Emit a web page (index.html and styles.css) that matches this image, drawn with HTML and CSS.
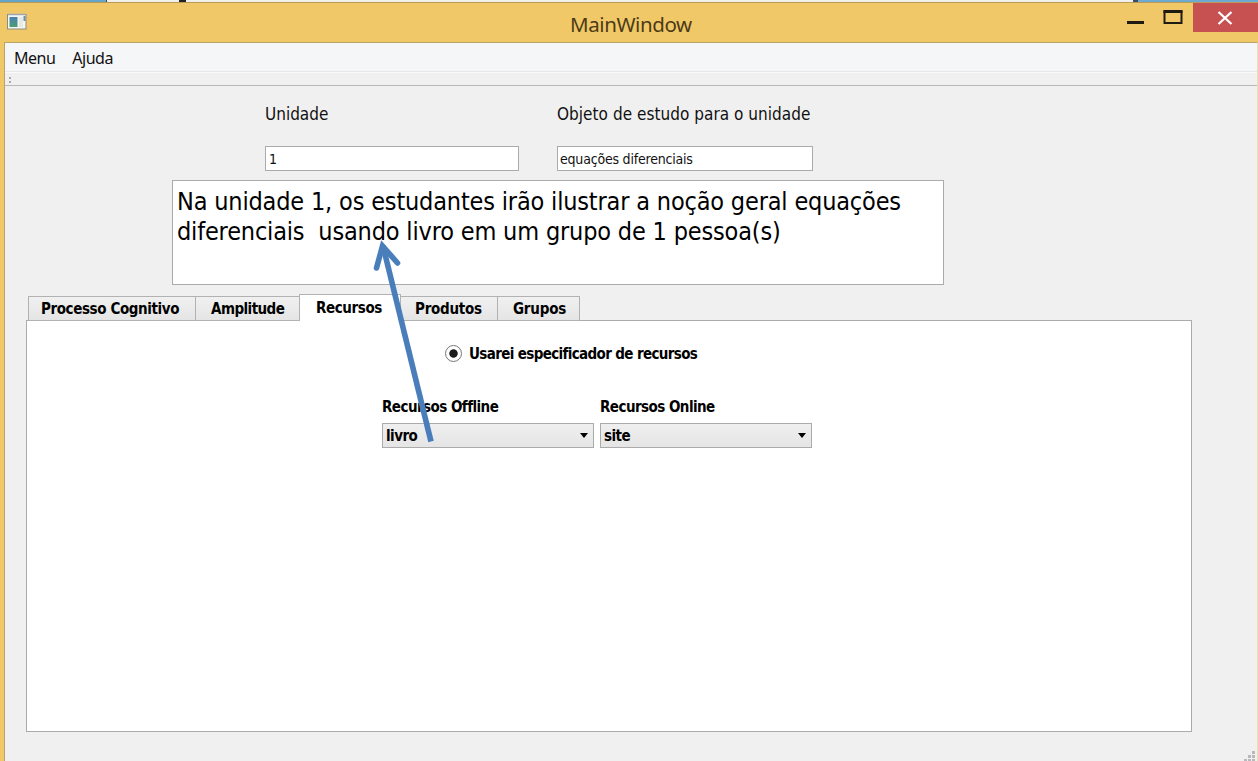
FILE: index.html
```html
<!DOCTYPE html>
<html lang="pt">
<head>
<meta charset="utf-8">
<title>MainWindow</title>
<link rel="stylesheet" href="styles.css">
</head>
<body>
<div class="desktop-strip"><span class="strip-blue"></span><span class="strip-white"></span><span class="strip-mark"></span><span class="strip-rest"></span><span class="strip-dark"></span><span class="strip-end"></span></div>
<div class="window">
  <header class="titlebar">
    <svg class="app-icon" width="20" height="17" viewBox="0 0 20 17">
      <defs><linearGradient id="g" x1="0" y1="0" x2="0" y2="1"><stop offset="0" stop-color="#4a7fb0"/><stop offset="1" stop-color="#4aa070"/></linearGradient></defs>
      <rect x=".5" y="1.500" width="18.500" height="14.500" fill="#f7f7f2" stroke="#8d8b80"/>
      <path d="M1 1.500h18" stroke="#9aa7b0" stroke-width="1.500"/>
      <rect x="2.500" y="4" width="8" height="10" fill="url(#g)"/>
      <rect x="12" y="4" width="4" height="10" fill="#e4e9e6"/>
      <path d="M17.500 3v5" stroke="#6d8fa5" stroke-width="2"/>
    </svg>
    <h1 class="title">MainWindow</h1>
    <div class="controls">
      <svg class="min-max" width="67" height="30" viewBox="0 0 67 30">
        <rect x="1" y="18" width="17" height="3" fill="#1e1b12"/>
        <path d="M38.500 8.500h17v11.500h-17z" fill="none" stroke="#1e1b12" stroke-width="2"/>
        <path d="M37.500 8.500h19" stroke="#1e1b12" stroke-width="3"/>
      </svg>
      <span class="close"><svg width="16" height="14" viewBox="0 0 16 14"><path d="M1.500 1l13 12M14.500 1l-13 12" stroke="#fff" stroke-width="2.300"/></svg></span>
    </div>
  </header>
  <div class="client">
    <nav class="menubar"><span class="menu-item">Menu</span><span class="menu-item">Ajuda</span></nav>
    <div class="toolbar"><span class="grip"></span></div>
    <main class="content">
      <div class="fields">
        <div class="field unit"><label class="label">Unidade</label><div class="input">1</div></div>
        <div class="field object"><label class="label lab-object">Objeto de estudo para o unidade</label><div class="input inp-object">equações diferenciais</div></div>
      </div>
      <div class="summary"><div>Na unidade 1, os estudantes irão ilustrar a noção geral equações</div><div>diferenciais&nbsp; usando livro em um grupo de 1 pessoa(s)</div></div>
      <div class="tabs">
        <div class="tab t1">Processo Cognitivo</div><div class="tab t2">Amplitude</div><div class="tab t3 active">Recursos</div><div class="tab t4">Produtos</div><div class="tab t5">Grupos</div>
      </div>
      <section class="pane">
        <div class="radio-row"><span class="radio"></span><span class="radio-text">Usarei especificador de recursos</span></div>
        <div class="combos">
          <div class="combo-col"><span class="combo-label">Recursos Offline</span><div class="combo"><span>livro</span><span class="caret"></span></div></div>
          <div class="combo-col"><span class="combo-label">Recursos Online</span><div class="combo"><span>site</span><span class="caret"></span></div></div>
        </div>
      </section>
    </main>
  </div>
</div>
<svg class="arrow" width="70" height="210" viewBox="365 238 70 210">
  <path d="M431 441.500L383 246" fill="none" stroke="#4a7ebb" stroke-width="5.600"/>
  <path d="M376.500 268L382.500 246L397.500 263" fill="none" stroke="#4a7ebb" stroke-width="5.600" stroke-linecap="round" stroke-linejoin="miter"/>
</svg>
<svg class="size-grip" width="12" height="12" viewBox="0 0 12 12" fill="#b9b9bd"><path d="M8 0h3v3h-3zM4 4h3v3h-3zM8 4h3v3h-3zM0 8h3v3h-3zM4 8h3v3h-3zM8 8h3v3h-3z"/></svg>
</body>
</html>
```
FILE: styles.css
```css
* { box-sizing: border-box; }
body {
  margin: 0; width: 1258px; height: 761px; overflow: hidden; position: relative;
  display: flex; flex-direction: column;
  font-family: "DejaVu Sans Condensed", "DejaVu Sans", sans-serif; font-stretch: condensed;
  color: #111; white-space: nowrap; background: #f1c868;
}
.desktop-strip { display: flex; height: 2px; flex: none; background: #f2f0ea; }
.strip-blue { width: 107px; background: #64a5c8; border-right: 1px solid #444; }
.strip-white { width: 72px; }
.strip-mark { width: 7px; background: #222; }
.strip-rest { flex: 1; }
.strip-dark { width: 5px; background: #3f4b60; }
.strip-end { width: 120px; background: #6ea9cf; }
.window { flex: 1; display: flex; flex-direction: column; border-top: 1px solid #b89b58; }
.titlebar { height: 39px; flex: none; display: grid; grid-template-columns: 570px 1fr 132px; }
.app-icon { margin: 10px 0 0 7px; }
.title { margin: 0; padding-top: 6px; font: 400 20.5px/30px "Noto Sans", sans-serif; color: #4b3b17; letter-spacing: -.4px; }
.controls { display: flex; }
.min-max { flex: none; }
.close { width: 65px; height: 29px; padding-right: 2px; background: #c75050; display: flex; justify-content: center; align-items: center; }
.client {
  flex: 1; margin: 0 0 0 4px; border: solid #b9a568; border-width: 1px 1px 0 1px; border-right-color: #e9dfb0;
  background: #f0f0f0; display: flex; flex-direction: column;
}
.menubar { height: 29px; flex: none; background: #f5f6f8; display: flex; padding-left: 9px; gap: 17px; font: 400 16px/30px "Noto Sans", sans-serif; letter-spacing: -.5px; border-bottom: 1px solid #e6e7e9; }
.toolbar { height: 14px; flex: none; border-bottom: 1px solid #b8b8b8; border-top: 1px solid #fafafa; display: flex; }
.grip { width: 2px; height: 6px; margin: 4px 0 0 4px; border: solid #aaa; border-width: 2px 0; }
.content { flex: 1; display: flex; flex-direction: column; padding-left: 1px; }
.fields { display: flex; gap: 38px; padding: 17px 0 0 259px; }
.field { display: flex; flex-direction: column; gap: 21px; }
.unit { width: 254px; }
.object { width: 256px; }
.label { font-size: 17px; line-height: 22px; }
.lab-object { letter-spacing: .04px; }
.input { height: 25px; border: 1px solid #ababab; background: #fff; padding-left: 3px; font-size: 14px; line-height: 24px; }
.inp-object { letter-spacing: -.2px; padding-left: 2px; }
.summary { margin: 9px 0 0 166px; width: 772px; height: 105px; flex: none; border: 1px solid #ababab; background: #fff; padding: 6px 4px 0; font-size: 25px; line-height: 30px; letter-spacing: -.17px; color: #000; }
.tabs { display: flex; align-items: flex-end; height: 26px; margin: 10px 0 -1px 22px; flex: none; font-size: 15px; font-weight: 700; letter-spacing: -.4px; color: #000; position: relative; }
.tab { height: 25px; border: 1px solid #b2b2b2; border-left-width: 0; background: linear-gradient(#f0f0f0, #e5e5e5); line-height: 24px; }
.t1 { width: 168px; border-left-width: 1px; padding-left: 12px; }
.t2 { width: 104px; padding-left: 15px; letter-spacing: -.55px; }
.t3 { width: 102px; padding-left: 17px; }
.t4 { width: 97px; padding-left: 14px; letter-spacing: -.25px; }
.t5 { width: 82px; padding-left: 15px; letter-spacing: -.2px; }
.active { height: 27px; line-height: 26px; background: #fff; border-bottom: 0; border-left: 1px solid #b2b2b2; margin-left: -1px; padding-left: 16px; }
.pane { margin-left: 20px; width: 1166px; height: 412px; flex: none; border: 1px solid #ababab; background: #fff; font-size: 15px; font-weight: 700; letter-spacing: -.55px; color: #000; }
.radio-row { display: flex; align-items: center; gap: 7px; padding: 22px 0 0 418px; height: 42px; }
.radio-text { letter-spacing: -.64px; padding-top: 2px; }
.radio { width: 17px; height: 17px; border: 1px solid #777; border-radius: 50%; background: radial-gradient(circle, #1d1d1d 0 3.8px, #fff 4.6px); }
.combos { display: flex; gap: 6px; padding: 34px 0 0 355px; }
.combo-col { width: 212px; display: flex; flex-direction: column; gap: 6px; line-height: 20px; }
.combo { height: 25px; border: 1px solid #ababab; background: linear-gradient(#efefef, #e5e5e5); display: flex; justify-content: space-between; align-items: center; padding: 0 5px 0 3px; }
.caret { border: solid transparent; border-width: 5px 4.500px 0; border-top-color: #000; }
.arrow { position: absolute; left: 365px; top: 238px; }
.size-grip { position: absolute; left: 1244px; top: 751px; }
```
